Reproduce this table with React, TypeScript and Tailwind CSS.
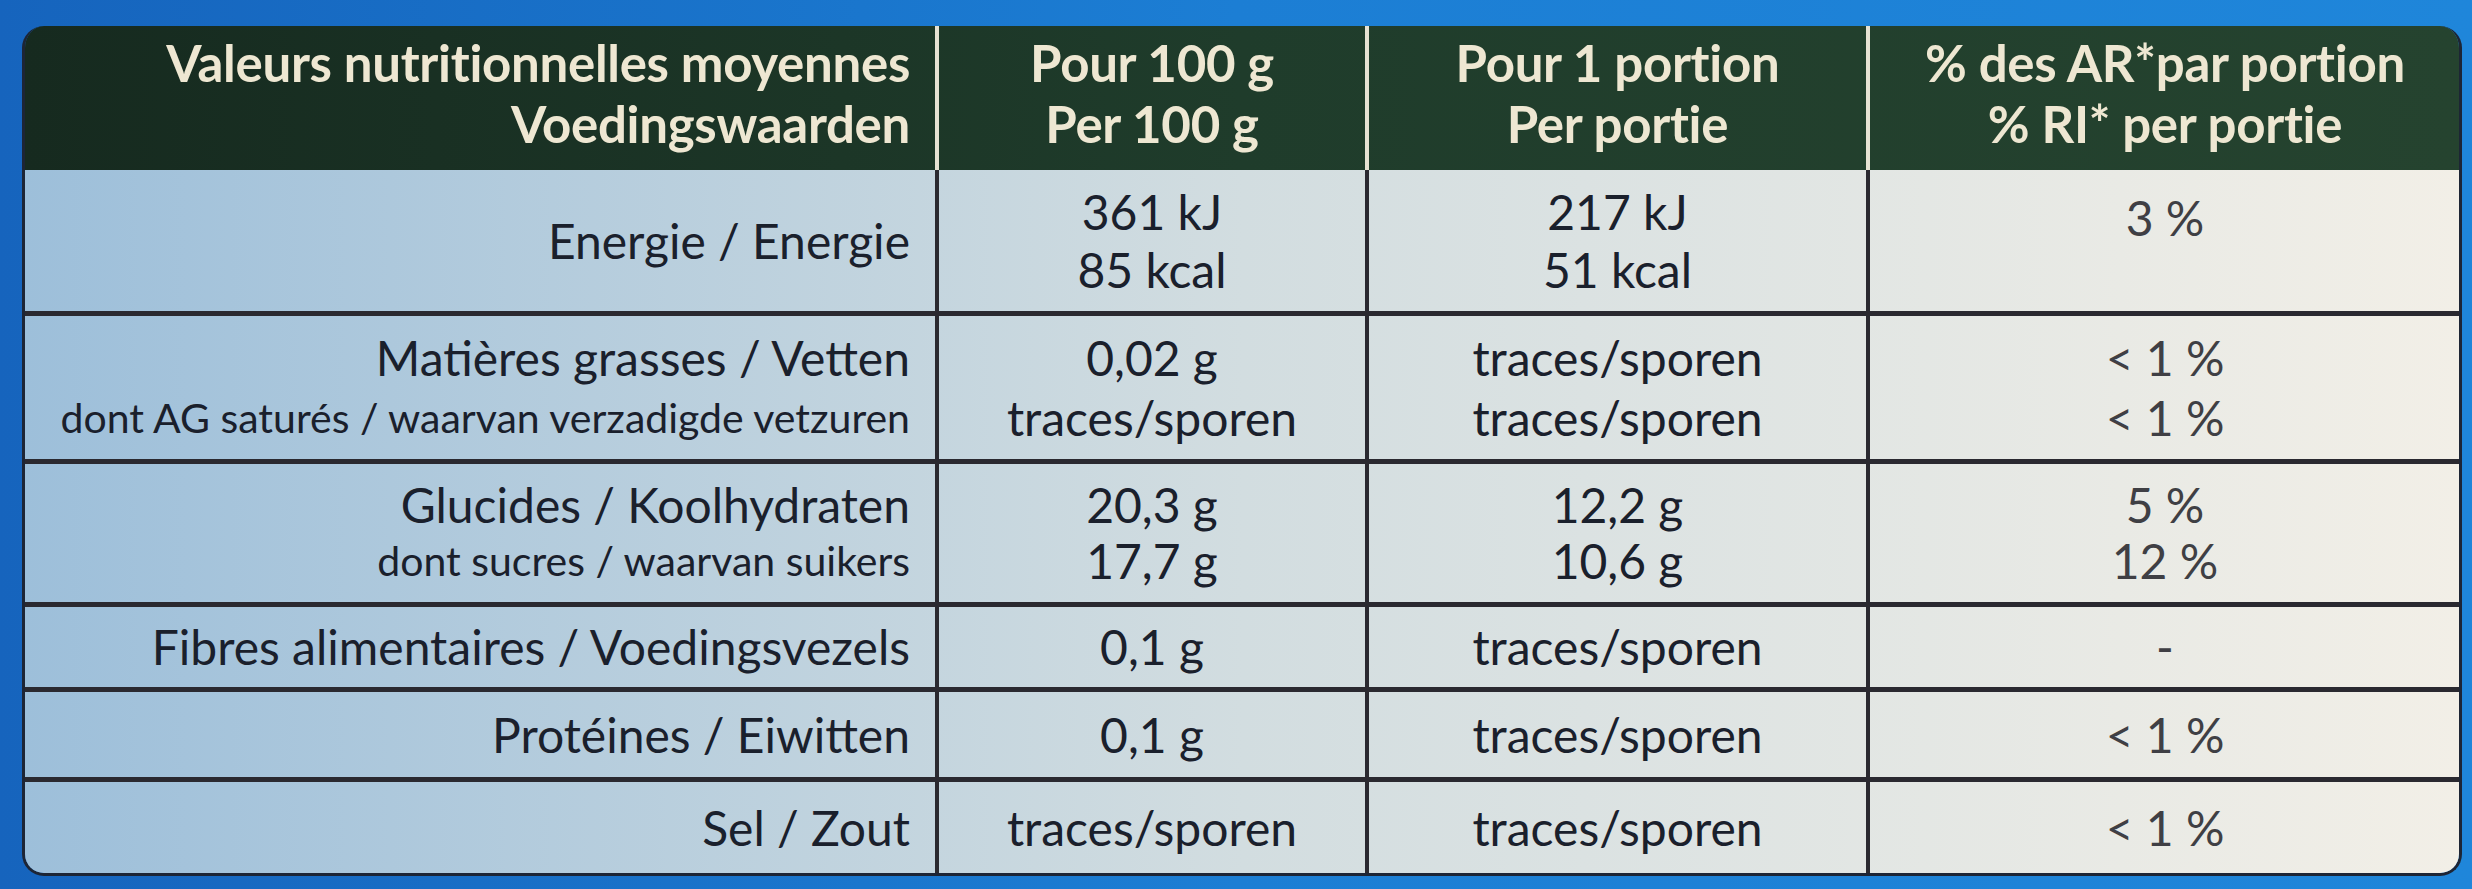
type Row = {
  h: string;
  lead: string;
  label: string[];
  per100: string[];
  portion: string[];
  ri: string[];
  riPad?: string;
};

const ROWS: Row[] = [
  { h: "h-[141px]", lead: "leading-[58px]", label: ["Energie / Energie"], per100: ["361 kJ", "85 kcal"], portion: ["217 kJ", "51 kcal"], ri: ["3 %"], riPad: "pb-[46px]" },
  {
    h: "h-[148px]",
    lead: "leading-[60px]",
    label: ["Matières grasses / Vetten", "dont AG saturés / waarvan verzadigde vetzuren"],
    per100: ["0,02 g", "traces/sporen"],
    portion: ["traces/sporen", "traces/sporen"],
    ri: ["< 1 %", "< 1 %"],
  },
  {
    h: "h-[143px]",
    lead: "leading-[56px]",
    label: ["Glucides / Koolhydraten", "dont sucres / waarvan suikers"],
    per100: ["20,3 g", "17,7 g"],
    portion: ["12,2 g", "10,6 g"],
    ri: ["5 %", "12 %"],
  },
  { h: "h-[85px]", lead: "leading-[60px]", label: ["Fibres alimentaires / Voedingsvezels"], per100: ["0,1 g"], portion: ["traces/sporen"], ri: ["-"] },
  { h: "h-[90px]", lead: "leading-[60px]", label: ["Protéines / Eiwitten"], per100: ["0,1 g"], portion: ["traces/sporen"], ri: ["< 1 %"] },
  { h: "h-[96px]", lead: "leading-[60px]", label: ["Sel / Zout"], per100: ["traces/sporen"], portion: ["traces/sporen"], ri: ["< 1 %"] },
];

const COLS = "grid grid-cols-[910px_430px_501px_594px]";

function Lines({ items, className }: { items: string[]; className?: string }) {
  return (
    <div className={className}>
      {items.map((t, i) => (
        <div key={i} className="whitespace-nowrap">
          {t}
        </div>
      ))}
    </div>
  );
}

export default function App() {
  return (
    <div
      className="w-[2472px] h-[889px] bg-gradient-to-r from-[#1664bd] via-[#1c7ed4] to-[#1f86da] pt-[26px] pl-[22px] overflow-hidden"
      style={{ fontFamily: "Lato, 'Open Sans', sans-serif" }}
    >
      <div className="w-[2440px] rounded-[22px] overflow-hidden border-l-[3px] border-b-[3px] border-r-[3px] border-[#1d2535] flex flex-col">
        {/* header */}
        <div className={`${COLS} h-[144px] bg-gradient-to-r from-[#162a1f] via-[#1f3c2b] to-[#25432f] text-[#eee7d2] font-bold text-[51px] leading-[61px] tracking-[-0.3px]`}>
          <div className="flex flex-col justify-center items-end pr-[25px] pb-[10px]">
            <div>Valeurs nutritionnelles moyennes</div>
            <div>Voedingswaarden</div>
          </div>
          <div className="flex flex-col justify-center items-center border-l-[4px] border-[#e6e2d3] pb-[10px]">
            <div>Pour 100 g</div>
            <div>Per 100 g</div>
          </div>
          <div className="flex flex-col justify-center items-center border-l-[4px] border-[#e6e2d3] pb-[10px]">
            <div>Pour 1 portion</div>
            <div>Per portie</div>
          </div>
          <div className="flex flex-col justify-center items-center border-l-[4px] border-[#e6e2d3] pb-[10px]">
            <div>% des AR*par portion</div>
            <div>% RI* per portie</div>
          </div>
        </div>

        {/* body */}
        <div className="bg-gradient-to-r from-[#9dbfda] via-[#d2dde0] to-[#f2efe7] text-[#1a202c] text-[48px]">
          {ROWS.map((r, i) => (
            <div key={i} className={`${COLS} ${r.h} ${r.lead} ${i > 0 ? "border-t-[5px] border-[#2a2930]" : ""}`}>
              <div className="flex flex-col justify-center items-end pr-[25px] text-right">
                {r.label.map((t, j) => (
                  <div key={j} className={j === 1 ? "text-[41px] whitespace-nowrap" : "whitespace-nowrap"}>
                    {t}
                  </div>
                ))}
              </div>
              <Lines items={r.per100} className="flex flex-col justify-center items-center border-l-[4px] border-[#2a2930]" />
              <Lines items={r.portion} className="flex flex-col justify-center items-center border-l-[4px] border-[#2a2930]" />
              <Lines
                items={r.ri}
                className={`flex flex-col justify-center items-center border-l-[4px] border-[#2a2930] text-[#3f3f44] ${r.riPad ?? ""}`}
              />
            </div>
          ))}
        </div>
      </div>
    </div>
  );
}
